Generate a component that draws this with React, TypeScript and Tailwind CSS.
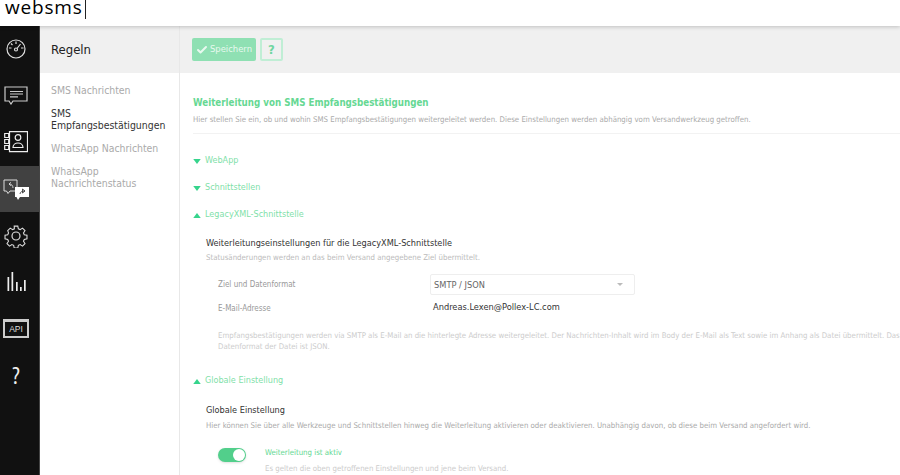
import React from 'react';
import { Check } from 'lucide-react';

const Rail = ({ active, children }: { active?: boolean; children: React.ReactNode }) => (
  <div className={`h-[46.6px] w-full flex items-center justify-center pr-[7px] ${active ? 'bg-[#414141]' : ''}`}>{children}</div>
);

const Toggle = ({ open, label }: { open?: boolean; label: string }) => (
  <div className="flex items-center h-[14px] text-[9px] text-[#7fdfa9]">
    <svg width="8" height="5" viewBox="0 0 9 6" className="mr-[2px]">
      {open ? <path d="M4.500 0 9 6H0z" fill="#36d48c" /> : <path d="M0 0h9L4.500 6z" fill="#36d48c" />}
    </svg>
    <span className="ml-[2px]">{label}</span>
  </div>
);

export default function App() {
  return (
    <div className="h-[475px] w-[900px] overflow-hidden bg-white font-['DejaVu_Sans_Condensed','DejaVu_Sans',sans-serif] [font-stretch:condensed]">
      <div className="h-[26px] bg-white shadow-[0_1px_4px_rgba(0,0,0,0.2)] relative z-10 flex items-start pl-[5px] [font-stretch:normal]">
        <span className="text-[19px] leading-[13px] pt-[1px] tracking-[0.8px] text-black font-['Open_Sans',sans-serif]">websms</span>
        <div className="w-px h-[19px] bg-[#222] ml-[2px]"></div>
      </div>
      <div className="flex h-[449px]">
        <div className="w-10 bg-[#111] border-r border-[#444] shrink-0 flex flex-col">
          <Rail>
            <svg width="20" height="20" viewBox="0 0 20 20" fill="none" stroke="#ddd" strokeWidth="1.200">
              <circle cx="10" cy="10" r="9" />
              <path d="M11 9.500l3.500-4.500M3 9h2.500M15 9h2.500M10 2.500v2.500M5 4.500l1.500 1.500" />
              <circle cx="10" cy="10.500" r="1.500" />
            </svg>
          </Rail>
          <Rail>
            <svg width="24" height="19" viewBox="0 0 24 19" fill="none" stroke="#ccc" strokeWidth="1.200">
              <path d="M1 1h22v14H9l-2 3-2-3H1z" />
              <path d="M6 5.500h13M6 8h13M6 10.800h8" />
            </svg>
          </Rail>
          <Rail>
            <svg width="24" height="22" viewBox="0 0 24 22" fill="none" stroke="#eee" strokeWidth="1.200">
              <path d="M5.500 .7h18v20h-18z" />
              <path d="M.7 2.500h4v4h-4zM.7 8.500h4v4h-4zM.7 14.500h4v4h-4z" />
              <circle cx="14" cy="6.500" r="2.800" />
              <path d="M9 16.500c0-6 10-6 10 0z" />
            </svg>
          </Rail>
          <Rail active>
            <svg width="27" height="21" viewBox="0 0 27 21" fill="none">
              <path d="M1 1h13v11H7l-2 2.500L3.500 12H1z" stroke="#ddd" />
              <path d="M10 9c0-2.500-1.500-4-4-4M6 5l2-1.700M6 5l2 1.700" stroke="#ddd" strokeWidth="0.900" />
              <path d="M12 8h14v10h-9l-2 3-1.500-3H12z" fill="#fff" />
              <path d="M17 15c0-2 2-3 5-3M22 12l-2.500-2v4z" stroke="#414141" strokeWidth="0.900" />
            </svg>
          </Rail>
          <Rail>
            <svg width="24" height="24" viewBox="0 0 24 24" fill="none" stroke="#ddd" strokeWidth="1.200">
              <path d="M10 1h4l.6 3 2 .9 2.600-1.700 2.800 2.800-1.700 2.600.9 2 3 .6v4l-3 .6-.9 2 1.700 2.600-2.800 2.800-2.600-1.700-2 .9-.6 3h-4l-.6-3-2-.9-2.600 1.700-2.800-2.800 1.700-2.600-.9-2-3-.6v-4l3-.6.9-2L2.800 6l2.800-2.800 2.600 1.700 2-.9z" transform="translate(1.200 1.200) scale(0.9)" />
              <circle cx="12" cy="12" r="4" />
            </svg>
          </Rail>
          <Rail>
            <svg width="20" height="20" viewBox="0 0 20 20" fill="#eee">
              <rect x="1.500" y="5" width="1.700" height="14" />
              <rect x="5.500" y="0" width="1.700" height="19" />
              <rect x="10" y="10" width="1.700" height="9" />
              <rect x="14" y="15" width="1.700" height="4" />
              <rect x="18" y="8" width="1.700" height="11" />
            </svg>
          </Rail>
          <Rail>
            <div className="w-[26px] h-[19px] border-2 border-[#ccc] border-t-[3px] flex items-center justify-center text-[8.500px] text-[#ddd] [font-stretch:normal] font-['Liberation_Sans',sans-serif]">API</div>
          </Rail>
          <Rail>
            <span className="text-[24px] text-[#eee] font-['Open_Sans',sans-serif]">?</span>
          </Rail>
        </div>
        <div className="w-[140px] shrink-0 border-r border-[#e8e8e8]">
          <div className="h-[47px] bg-[#f0f0f0] flex items-center pl-[11px] pt-[1px] text-[13px] text-[#222]">Regeln</div>
          <div className="pl-[11px] pt-[11px] text-[10.400px] leading-[12px] text-[#aaa]">
            <div>SMS Nachrichten</div>
            <div className="mt-[11px] text-[#333]">SMS<br />Empfangsbestätigungen</div>
            <div className="mt-[11px]">WhatsApp Nachrichten</div>
            <div className="mt-[11px]">WhatsApp<br />Nachrichtenstatus</div>
          </div>
        </div>
        <div className="flex-1 min-w-0">
          <div className="h-[47px] bg-[#f0f0f0] flex items-center pl-[12px] gap-[4px]">
            <button className="w-[64px] h-[23px] rounded-[2px] bg-[#8fe0b3] text-[#e8f9ef] text-[9.400px] flex items-center justify-center gap-[2px]">
              <Check size={12} strokeWidth={4} />
              Speichern
            </button>
            <div className="w-[23px] h-[23px] border-2 rounded-[2px] border-[#c0eed5] flex items-center justify-center text-[#6fd6a0] text-[13px] font-bold">?</div>
          </div>
          <div className="pl-[13px] pt-[24px] whitespace-nowrap">
            <div className="text-[9.700px] leading-[12px] font-bold text-[#66d893]">Weiterleitung von SMS Empfangsbestätigungen</div>
            <div className="mt-[6px] text-[7.800px] leading-[10px] text-[#aaa]">Hier stellen Sie ein, ob und wohin SMS Empfangsbestätigungen weitergeleitet werden. Diese Einstellungen werden abhängig vom Versandwerkzeug getroffen.</div>
            <div className="mt-[8px] border-t border-[#f2f2f2] mr-[-13px]"></div>
            <div className="mt-[20px] flex flex-col gap-[13px]">
              <Toggle label="WebApp" />
              <Toggle label="Schnittstellen" />
              <Toggle open label="LegacyXML-Schnittstelle" />
            </div>
            <div className="pl-[13px]">
              <div className="mt-[15px] text-[9.100px] leading-[12px] text-[#333]">Weiterleitungseinstellungen für die LegacyXML-Schnittstelle</div>
              <div className="mt-[4px] text-[7.800px] leading-[10px] text-[#bbb]">Statusänderungen werden an das beim Versand angegebene Ziel übermittelt.</div>
              <div className="mt-[11px] pl-[12px] flex text-[8px] text-[#999]">
                <div className="w-[212px]">
                  <div className="mt-[6px] leading-[10px]">Ziel und Datenformat</div>
                  <div className="mt-[14px] leading-[10px]">E-Mail-Adresse</div>
                </div>
                <div>
                  <div className="w-[205px] h-[21px] border border-[#eee] rounded-[2px] flex items-center justify-between px-[3px] text-[9.200px] text-[#666]">
                    <span>SMTP / JSON</span>
                    <svg width="6" height="3" viewBox="0 0 6 3" className="mr-[8px]"><path d="M0 0h6L3 3z" fill="#bbb" /></svg>
                  </div>
                  <div className="mt-[6px] pl-[3px] text-[9.200px] leading-[12px] text-[#333]">Andreas.Lexen@Pollex-LC.com</div>
                </div>
              </div>
              <div className="mt-[16px] pl-[12px] text-[7.800px] leading-[11px] text-[#ccc]">
                <div>Empfangsbestätigungen werden via SMTP als E-Mail an die hinterlegte Adresse weitergeleitet. Der Nachrichten-Inhalt wird im Body der E-Mail als Text sowie im Anhang als Datei übermittelt. Das</div>
                <div>Datenformat der Datei ist JSON.</div>
              </div>
            </div>
            <div className="mt-[22px]"><Toggle open label="Globale Einstellung" /></div>
            <div className="pl-[13px]">
              <div className="mt-[16px] text-[9.100px] leading-[12px] text-[#333]">Globale Einstellung</div>
              <div className="mt-[5px] text-[7.800px] leading-[10px] text-[#aaa]">Hier können Sie über alle Werkzeuge und Schnittstellen hinweg die Weiterleitung aktivieren oder deaktivieren. Unabhängig davon, ob diese beim Versand angefordert wird.</div>
              <div className="mt-[16px] pl-[12px] flex">
                <div className="w-[28px] h-[14px] rounded-full bg-[#52cf8b] flex items-center justify-end pr-[1px] mt-[1px] shadow-sm">
                  <div className="w-[12px] h-[12px] rounded-full bg-white"></div>
                </div>
                <div className="ml-[19px] mt-[1px]">
                  <div className="text-[7.800px] leading-[10px] text-[#5fd792]">Weiterleitung ist aktiv</div>
                  <div className="mt-[6px] text-[7.800px] leading-[10px] text-[#ccc]">Es gelten die oben getroffenen Einstellungen und jene beim Versand.</div>
                </div>
              </div>
            </div>
          </div>
        </div>
      </div>
    </div>
  );
}
